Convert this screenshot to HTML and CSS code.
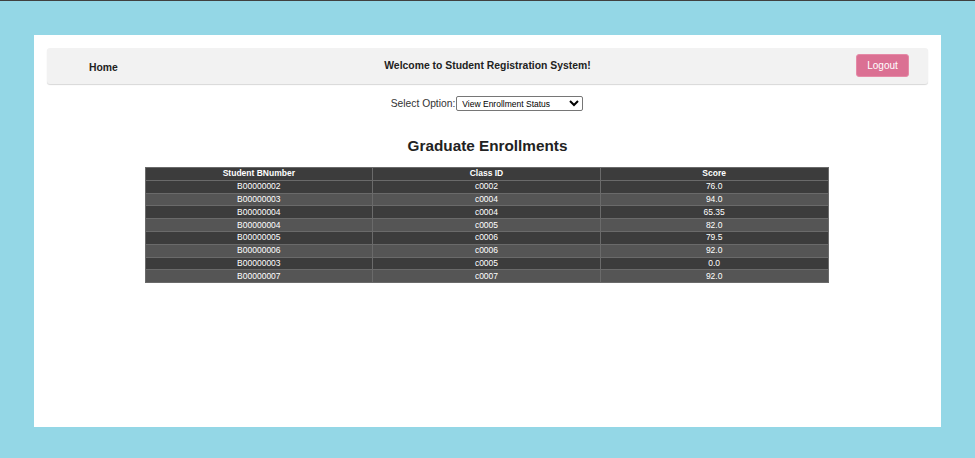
FILE: index.html
```html
<!DOCTYPE html>
<html>
<head>
<meta charset="utf-8">
<link rel="stylesheet" href="styles.css">
</head>
<body>
<div class="topline"></div>
<div class="panel">
  <div class="navbar">
    <div class="nav-left"><a class="home">Home</a></div>
    <div class="welcome">Welcome to Student Registration System!</div>
    <div class="nav-right"><button class="logout">Logout</button></div>
  </div>
  <div class="selectrow">
    <label class="sel-label">Select Option:</label>
    <select class="sel">
      <option>View Enrollment Status</option>
    </select>
  </div>
  <h2 class="title">Graduate Enrollments</h2>
  <table class="grid">
    <thead>
      <tr><th>Student BNumber</th><th>Class ID</th><th>Score</th></tr>
    </thead>
    <tbody>
      <tr><td>B00000002</td><td>c0002</td><td>76.0</td></tr>
      <tr><td>B00000003</td><td>c0004</td><td>94.0</td></tr>
      <tr><td>B00000004</td><td>c0004</td><td>65.35</td></tr>
      <tr><td>B00000004</td><td>c0005</td><td>82.0</td></tr>
      <tr><td>B00000005</td><td>c0006</td><td>79.5</td></tr>
      <tr><td>B00000006</td><td>c0006</td><td>92.0</td></tr>
      <tr><td>B00000003</td><td>c0005</td><td>0.0</td></tr>
      <tr><td>B00000007</td><td>c0007</td><td>92.0</td></tr>
    </tbody>
  </table>
</div>
</body>
</html>
```
FILE: styles.css
```css
html, body {
  margin: 0;
  padding: 0;
}
body {
  background: #94d7e6;
  font-family: "Liberation Sans", Arial, sans-serif;
  width: 975px;
  height: 458px;
  overflow: hidden;
}
.topline {
  height: 1px;
  background: #404040;
}
.panel {
  margin: 34px 0 0 34px;
  width: 907px;
  height: 392px;
  background: #fff;
  box-sizing: border-box;
  padding: 13px 13px 0 13px;
  display: flex;
  flex-direction: column;
  align-items: center;
}
.navbar {
  align-self: stretch;
  height: 36px;
  box-sizing: border-box;
  background: #f2f2f2;
  border-radius: 3px;
  box-shadow: 0 1px 1px #d8d8d8;
  display: grid;
  grid-template-columns: 1fr auto 1fr;
  align-items: center;
  padding: 0 19px 1px 19px;
}
.nav-left {
  padding-left: 23px;
}
.nav-right {
  display: flex;
  justify-content: flex-end;
}
.home {
  font-size: 10.4px;
  font-weight: bold;
  color: #222;
}
.welcome {
  text-align: center;
  font-size: 10.4px;
  font-weight: bold;
  color: #222;
}
.logout {
  width: 53px;
  height: 23px;
  background: #db7093;
  color: #fff;
  border: 1px solid #e58aa7;
  border-radius: 3px;
  font-family: "Liberation Sans", Arial, sans-serif;
  font-size: 10px;
  padding: 0;
}
.selectrow {
  margin-top: 12px;
  display: flex;
  align-items: center;
  padding-right: 1px;
}
.sel-label {
  font-size: 10.3px;
  color: #333;
  margin-right: 1px;
}
.sel {
  width: 127px;
  height: 15px;
  font-family: "Liberation Sans", Arial, sans-serif;
  font-size: 8.5px;
  padding: 0 1px;
  border: 1px solid #767676;
  border-radius: 2px;
  background: #fff;
  color: #000;
}
.title {
  margin: 26px 0 0 0;
  font-size: 15.3px;
  font-weight: bold;
  color: #222;
  line-height: 18px;
}
.grid {
  margin-top: 12px;
  margin-right: 2px;
  width: 684px;
  border-collapse: collapse;
  font-size: 8.5px;
  color: #fff;
  text-align: center;
  table-layout: fixed;
}
.grid th, .grid td {
  border: 1px solid #6a6a6a;
  height: 11.8px;
  padding: 0;
  line-height: 11px;
}
.grid th {
  background: #3c3c3c;
  font-weight: bold;
}
.grid tbody tr:nth-child(odd) td {
  background: #3c3c3c;
}
.grid tbody tr:nth-child(even) td {
  background: #555555;
}
```
